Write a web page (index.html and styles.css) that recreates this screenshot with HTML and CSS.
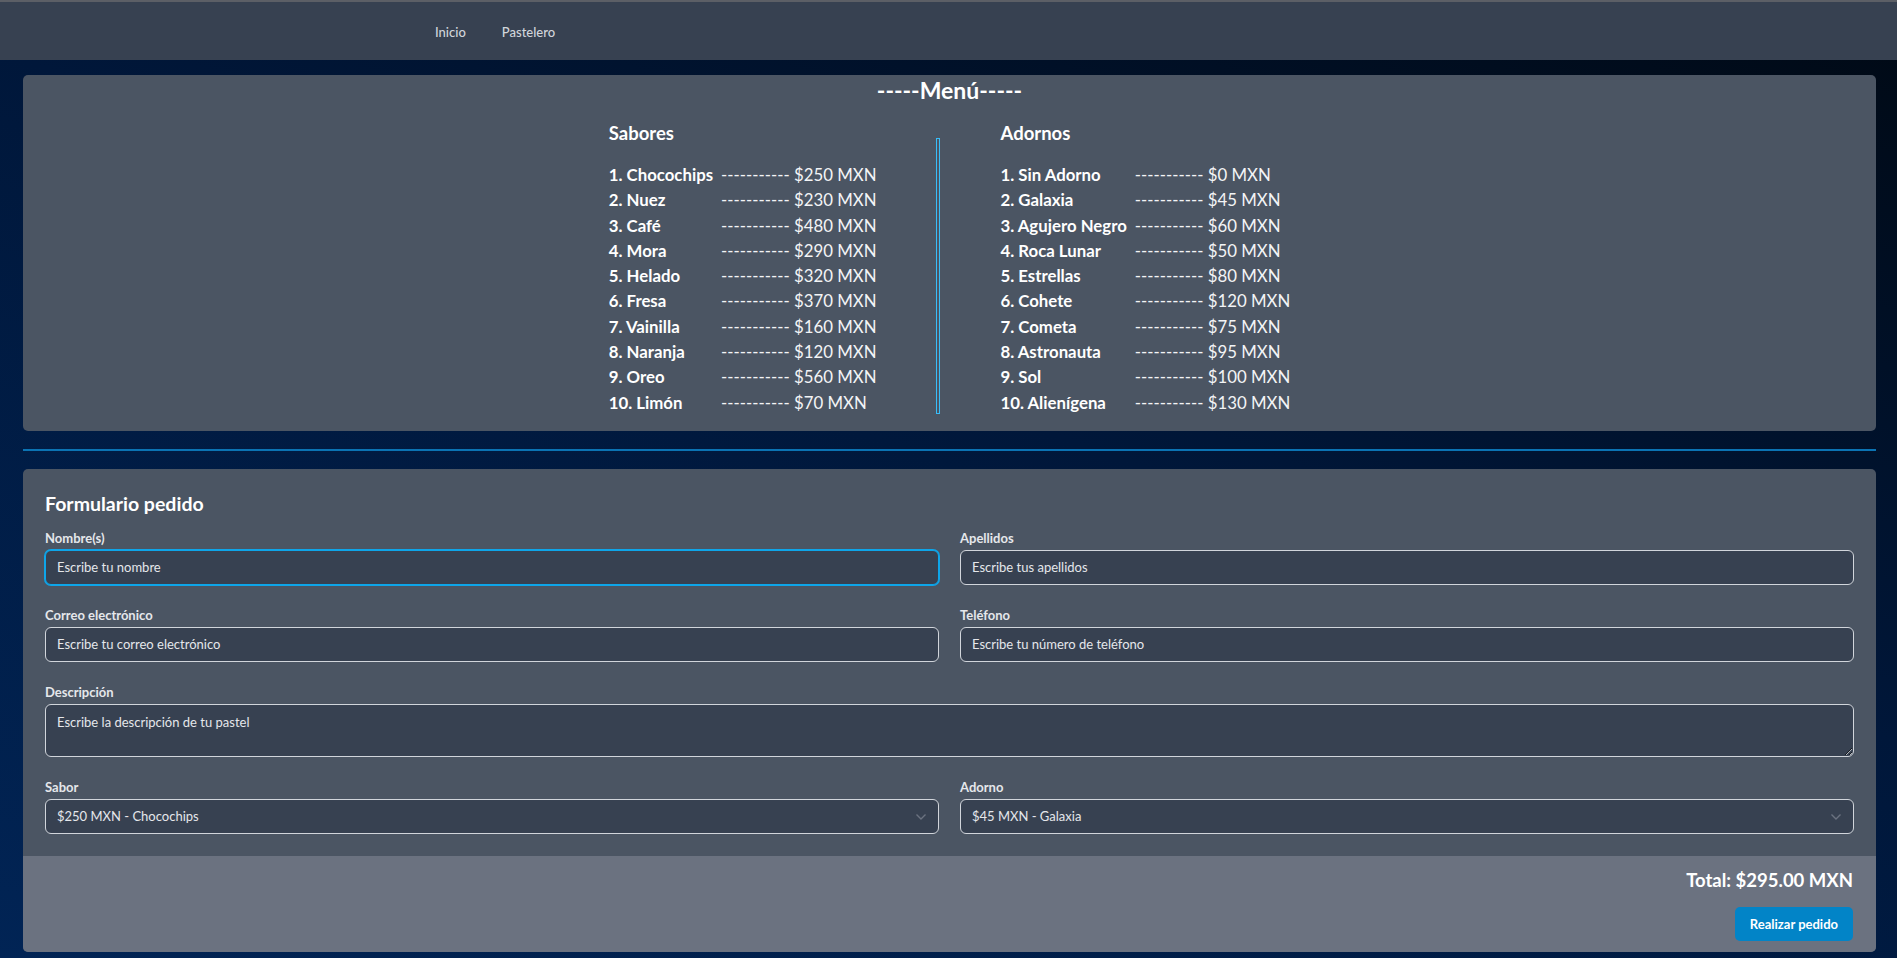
FILE: index.html
```html
<!DOCTYPE html>
<html lang="es">
<head>
<meta charset="utf-8">
<title>Pastelería</title>
<link rel="stylesheet" href="styles.css">
</head>
<body>
<nav class="navbar">
  <div class="nav-links">
    <a href="#" class="nav-link">Inicio</a>
    <a href="#" class="nav-link">Pastelero</a>
  </div>
</nav>
<main class="main">
  <section class="menu-card">
    <h1 class="menu-title">-----Menú-----</h1>
    <div class="menu-cols">
      <div class="menu-col">
        <h2 class="menu-heading">Sabores</h2>
        <div class="menu-list">
          <span class="item-name">1. Chocochips</span><span class="item-price">----------- $250 MXN</span>
          <span class="item-name">2. Nuez</span><span class="item-price">----------- $230 MXN</span>
          <span class="item-name">3. Café</span><span class="item-price">----------- $480 MXN</span>
          <span class="item-name">4. Mora</span><span class="item-price">----------- $290 MXN</span>
          <span class="item-name">5. Helado</span><span class="item-price">----------- $320 MXN</span>
          <span class="item-name">6. Fresa</span><span class="item-price">----------- $370 MXN</span>
          <span class="item-name">7. Vainilla</span><span class="item-price">----------- $160 MXN</span>
          <span class="item-name">8. Naranja</span><span class="item-price">----------- $120 MXN</span>
          <span class="item-name">9. Oreo</span><span class="item-price">----------- $560 MXN</span>
          <span class="item-name">10. Limón</span><span class="item-price">----------- $70 MXN</span>
        </div>
      </div>
      <div class="divider"></div>
      <div class="menu-col">
        <h2 class="menu-heading">Adornos</h2>
        <div class="menu-list">
          <span class="item-name">1. Sin Adorno</span><span class="item-price">----------- $0 MXN</span>
          <span class="item-name">2. Galaxia</span><span class="item-price">----------- $45 MXN</span>
          <span class="item-name">3. Agujero Negro</span><span class="item-price">----------- $60 MXN</span>
          <span class="item-name">4. Roca Lunar</span><span class="item-price">----------- $50 MXN</span>
          <span class="item-name">5. Estrellas</span><span class="item-price">----------- $80 MXN</span>
          <span class="item-name">6. Cohete</span><span class="item-price">----------- $120 MXN</span>
          <span class="item-name">7. Cometa</span><span class="item-price">----------- $75 MXN</span>
          <span class="item-name">8. Astronauta</span><span class="item-price">----------- $95 MXN</span>
          <span class="item-name">9. Sol</span><span class="item-price">----------- $100 MXN</span>
          <span class="item-name">10. Alienígena</span><span class="item-price">----------- $130 MXN</span>
        </div>
      </div>
    </div>
  </section>

  <hr class="separator">

  <form class="order-card">
    <div class="order-body">
      <h2 class="order-title">Formulario pedido</h2>
      <div class="form-grid">
        <div class="field">
          <label class="label">Nombre(s)</label>
          <input class="input input-focus" type="text" placeholder="Escribe tu nombre">
        </div>
        <div class="field">
          <label class="label">Apellidos</label>
          <input class="input" type="text" placeholder="Escribe tus apellidos">
        </div>
        <div class="field">
          <label class="label">Correo electrónico</label>
          <input class="input" type="text" placeholder="Escribe tu correo electrónico">
        </div>
        <div class="field">
          <label class="label">Teléfono</label>
          <input class="input" type="text" placeholder="Escribe tu número de teléfono">
        </div>
        <div class="field field-full">
          <label class="label">Descripción</label>
          <textarea class="input textarea" placeholder="Escribe la descripción de tu pastel"></textarea>
        </div>
        <div class="field">
          <label class="label">Sabor</label>
          <div class="select-wrap">
            <select class="input select">
              <option>$250 MXN - Chocochips</option>
            </select>
            <svg class="chevron" width="12" height="8" viewBox="0 0 12 8"><path d="M1.5 1.5 L6 6 L10.5 1.5" fill="none" stroke="#6b7280" stroke-width="1.4"/></svg>
          </div>
        </div>
        <div class="field">
          <label class="label">Adorno</label>
          <div class="select-wrap">
            <select class="input select">
              <option>$45 MXN - Galaxia</option>
            </select>
            <svg class="chevron" width="12" height="8" viewBox="0 0 12 8"><path d="M1.5 1.5 L6 6 L10.5 1.5" fill="none" stroke="#6b7280" stroke-width="1.4"/></svg>
          </div>
        </div>
      </div>
    </div>
    <div class="order-footer">
      <p class="total">Total: $295.00 MXN</p>
      <button type="button" class="btn">Realizar pedido</button>
    </div>
  </form>
</main>
</body>
</html>
```
FILE: styles.css
```css
* { box-sizing: border-box; }

html, body {
  margin: 0;
  padding: 0;
}

body {
  min-height: 100vh;
  font-family: "Lato", "Open Sans", sans-serif;
  color: #ffffff;
  background: linear-gradient(200deg, #000914 0%, #00173a 45%, #012455 100%);
}

/* Navbar */
.navbar {
  height: 60px;
  background: #374151;
  border-top: 2px solid #5c5f66;
  display: flex;
  align-items: center;
  padding-left: 435px;
}

.nav-links {
  display: flex;
  gap: 36px;
  margin-top: 1px;
}

.nav-link {
  color: #d1d5db;
  text-decoration: none;
  font-size: 13px;
  font-weight: 500;
}

/* Main */
.main {
  padding: 15px 21px 6px 23px;
}

/* Menu card */
.menu-card {
  background: #4b5563;
  border-radius: 5px;
  padding: 1px 0 16px;
}

.menu-title {
  margin: 0 0 15px;
  text-align: center;
  font-size: 23px;
  line-height: 28px;
  font-weight: 700;
}

.menu-cols {
  display: flex;
  justify-content: center;
  gap: 60px;
}

.menu-heading {
  margin: 0 0 15px;
  font-size: 18.5px;
  line-height: 28px;
  font-weight: 700;
}

.menu-list {
  display: grid;
  grid-template-columns: auto auto;
  column-gap: 8px;
  font-size: 16.8px;
  line-height: 25.3px;
}

.item-name {
  font-weight: 700;
  white-space: nowrap;
}

.item-price {
  color: #f3f4f6;
  white-space: nowrap;
}

.divider {
  width: 4px;
  border: 1px solid #38bdf8;
  margin: 19px 0 1px;
}

/* Separator */
.separator {
  height: 0;
  margin: 18px 0 18px;
  border: 0;
  border-top: 1px solid #0b73b3;
  border-bottom: 1px solid #0b73b3;
}

/* Order form */
.order-card {
  background: #4b5563;
  border-radius: 5px;
  overflow: hidden;
}

.order-body {
  padding: 21px 22px 22px;
}

.order-title {
  margin: 0 0 11px;
  font-size: 19.5px;
  line-height: 28px;
  font-weight: 700;
}

.form-grid {
  display: grid;
  grid-template-columns: 1fr 1fr;
  column-gap: 21px;
  row-gap: 21px;
}

.field-full {
  grid-column: 1 / -1;
}

.label {
  display: block;
  margin-bottom: 3px;
  font-size: 13px;
  line-height: 18px;
  font-weight: 700;
  color: #e5e7eb;
}

.input {
  display: block;
  width: 100%;
  height: 35px;
  padding: 0 11px;
  background: #374151;
  border: 1px solid #d1d5db;
  border-radius: 6px;
  color: #e5e7eb;
  font-family: "Lato", "Open Sans", sans-serif;
  font-size: 13px;
  outline: none;
}

.input::placeholder {
  color: #e5e7eb;
  opacity: 1;
}

.input-focus {
  border-color: #0ea5e9;
  box-shadow: 0 0 0 1px #0ea5e9;
}

.textarea {
  height: 53px;
  padding: 8px 11px;
  line-height: 18px;
  resize: vertical;
}

.select-wrap {
  position: relative;
}

.select {
  appearance: none;
  -webkit-appearance: none;
}

.chevron {
  position: absolute;
  right: 12px;
  top: 14px;
  pointer-events: none;
}

.order-footer {
  background: #6b7280;
  padding: 10px 23px 11px;
  display: flex;
  flex-direction: column;
  align-items: flex-end;
}

.total {
  margin: 0;
  font-size: 18.5px;
  line-height: 28px;
  font-weight: 700;
}

.btn {
  margin-top: 13px;
  height: 34px;
  padding: 0 15px;
  background: #0284c7;
  color: #ffffff;
  border: 0;
  border-radius: 5px;
  font-family: "Lato", "Open Sans", sans-serif;
  font-size: 13px;
  font-weight: 700;
}
```
